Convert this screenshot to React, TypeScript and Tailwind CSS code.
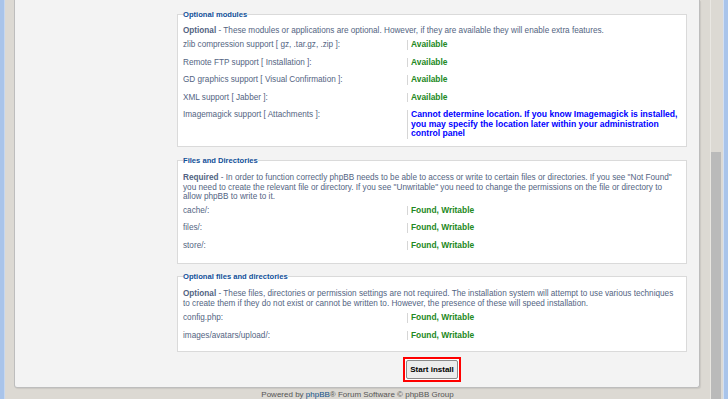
import React from "react";

type Row = { label: string; value: React.ReactNode; kind: "ok" | "warn" };

function FieldRow({ label, value, kind }: Row) {
  return (
    <div className="flex py-[4px] leading-[9.5px]">
      <div className="w-[224px] shrink-0 text-[8.2px] text-[#536482]">{label}</div>
      <div
        className={
          kind === "ok"
            ? "whitespace-nowrap border-l border-[#d6d6d6] pl-[3px] text-[8.4px] font-bold text-[#228822]"
            : "whitespace-nowrap border-l border-[#d6d6d6] pl-[3px] text-[8.6px] font-bold text-[#0000ff]"
        }
      >
        {value}
      </div>
    </div>
  );
}

function Box({
  legend,
  className,
  children,
}: {
  legend: string;
  className: string;
  children: React.ReactNode;
}) {
  return (
    <fieldset className={"border border-[#dadada] bg-white px-[5px] " + className}>
      <legend className="text-[7.6px] font-bold leading-[11px] text-[#115098]">{legend}</legend>
      {children}
    </fieldset>
  );
}

export default function App() {
  return (
    <div className="flex h-[399px] w-[728px] overflow-hidden bg-[#dcd9d3] font-['Liberation_Sans',Arial,sans-serif] text-[8px]">
      <div className="w-[5px] shrink-0 border-r border-[#c6d7ef] bg-[#a9c4ea]" />
      <div className="flex w-[705px] shrink-0 flex-col">
        <div className="ml-[9px] mr-[10px] flex flex-col rounded-b-[3px] border-x border-b border-[#bdbdbd] bg-[#f3f3f3] pb-[5px] pl-[162px] pr-[12px] pt-[9px] shadow-[1px_1px_1px_rgba(0,0,0,0.08)]">
          <Box legend="Optional modules" className="pb-[3.5px] pt-[5.5px]">
            <p className="mb-[1px] whitespace-nowrap text-[8.2px] leading-[9.5px] text-[#536482]">
              <b>Optional</b> - These modules or applications are optional. However, if they are available they will enable extra features.
            </p>
            <FieldRow label="zlib compression support [ gz, .tar.gz, .zip ]:" value="Available" kind="ok" />
            <FieldRow label="Remote FTP support [ Installation ]:" value="Available" kind="ok" />
            <FieldRow label="GD graphics support [ Visual Confirmation ]:" value="Available" kind="ok" />
            <FieldRow label="XML support [ Jabber ]:" value="Available" kind="ok" />
            <FieldRow
              label="Imagemagick support [ Attachments ]:"
              value={
                <>
                  Cannot determine location. If you know Imagemagick is installed,
                  <br />
                  you may specify the location later within your administration
                  <br />
                  control panel
                </>
              }
              kind="warn"
            />
          </Box>

          <Box legend="Files and Directories" className="mt-[8px] pb-[9px] pt-[7px]">
            <p className="whitespace-nowrap text-[8.2px] leading-[9.5px] text-[#536482]">
              <b>Required</b> - In order to function correctly phpBB needs to be able to access or write to certain files or directories. If you see &quot;Not Found&quot;
              <br />
              you need to create the relevant file or directory. If you see &quot;Unwritable&quot; you need to change the permissions on the file or directory to
              <br />
              allow phpBB to write to it.
            </p>
            <FieldRow label="cache/:" value="Found, Writable" kind="ok" />
            <FieldRow label="files/:" value="Found, Writable" kind="ok" />
            <FieldRow label="store/:" value="Found, Writable" kind="ok" />
          </Box>

          <Box legend="Optional files and directories" className="mt-[7px] pb-[7px] pt-[7px]">
            <p className="mb-[1px] whitespace-nowrap text-[8.2px] leading-[9.5px] text-[#536482]">
              <b>Optional</b> - These files, directories or permission settings are not required. The installation system will attempt to use various techniques
              <br />
              to create them if they do not exist or cannot be written to. However, the presence of these will speed installation.
            </p>
            <FieldRow label="config.php:" value="Found, Writable" kind="ok" />
            <FieldRow label="images/avatars/upload/:" value="Found, Writable" kind="ok" />
          </Box>

          <div className="mt-[5px] flex justify-center">
            <div className="border-2 border-[#ff0000] bg-white p-[1px]">
              <button className="flex h-[19px] w-[52px] items-center justify-center rounded-[2px] border border-[#8a8a8a] bg-[#ececec] text-[8px] font-bold text-black">
                Start install
              </button>
            </div>
          </div>
        </div>
        <div className="pt-[2px] text-center leading-[10px] text-[#555555]">
          Powered by <span className="text-[#105289]">phpBB</span>® Forum Software © phpBB Group
        </div>
      </div>
      <div className="flex w-[13px] shrink-0 flex-col border-l border-[#e9e7e2] pr-[2px]">
        <div className="mt-[152px] flex-1 bg-[#bababa]" />
      </div>
      <div className="w-[5px] shrink-0 border-l border-[#d2dff2] bg-[#a9c4ea]" />
    </div>
  );
}
